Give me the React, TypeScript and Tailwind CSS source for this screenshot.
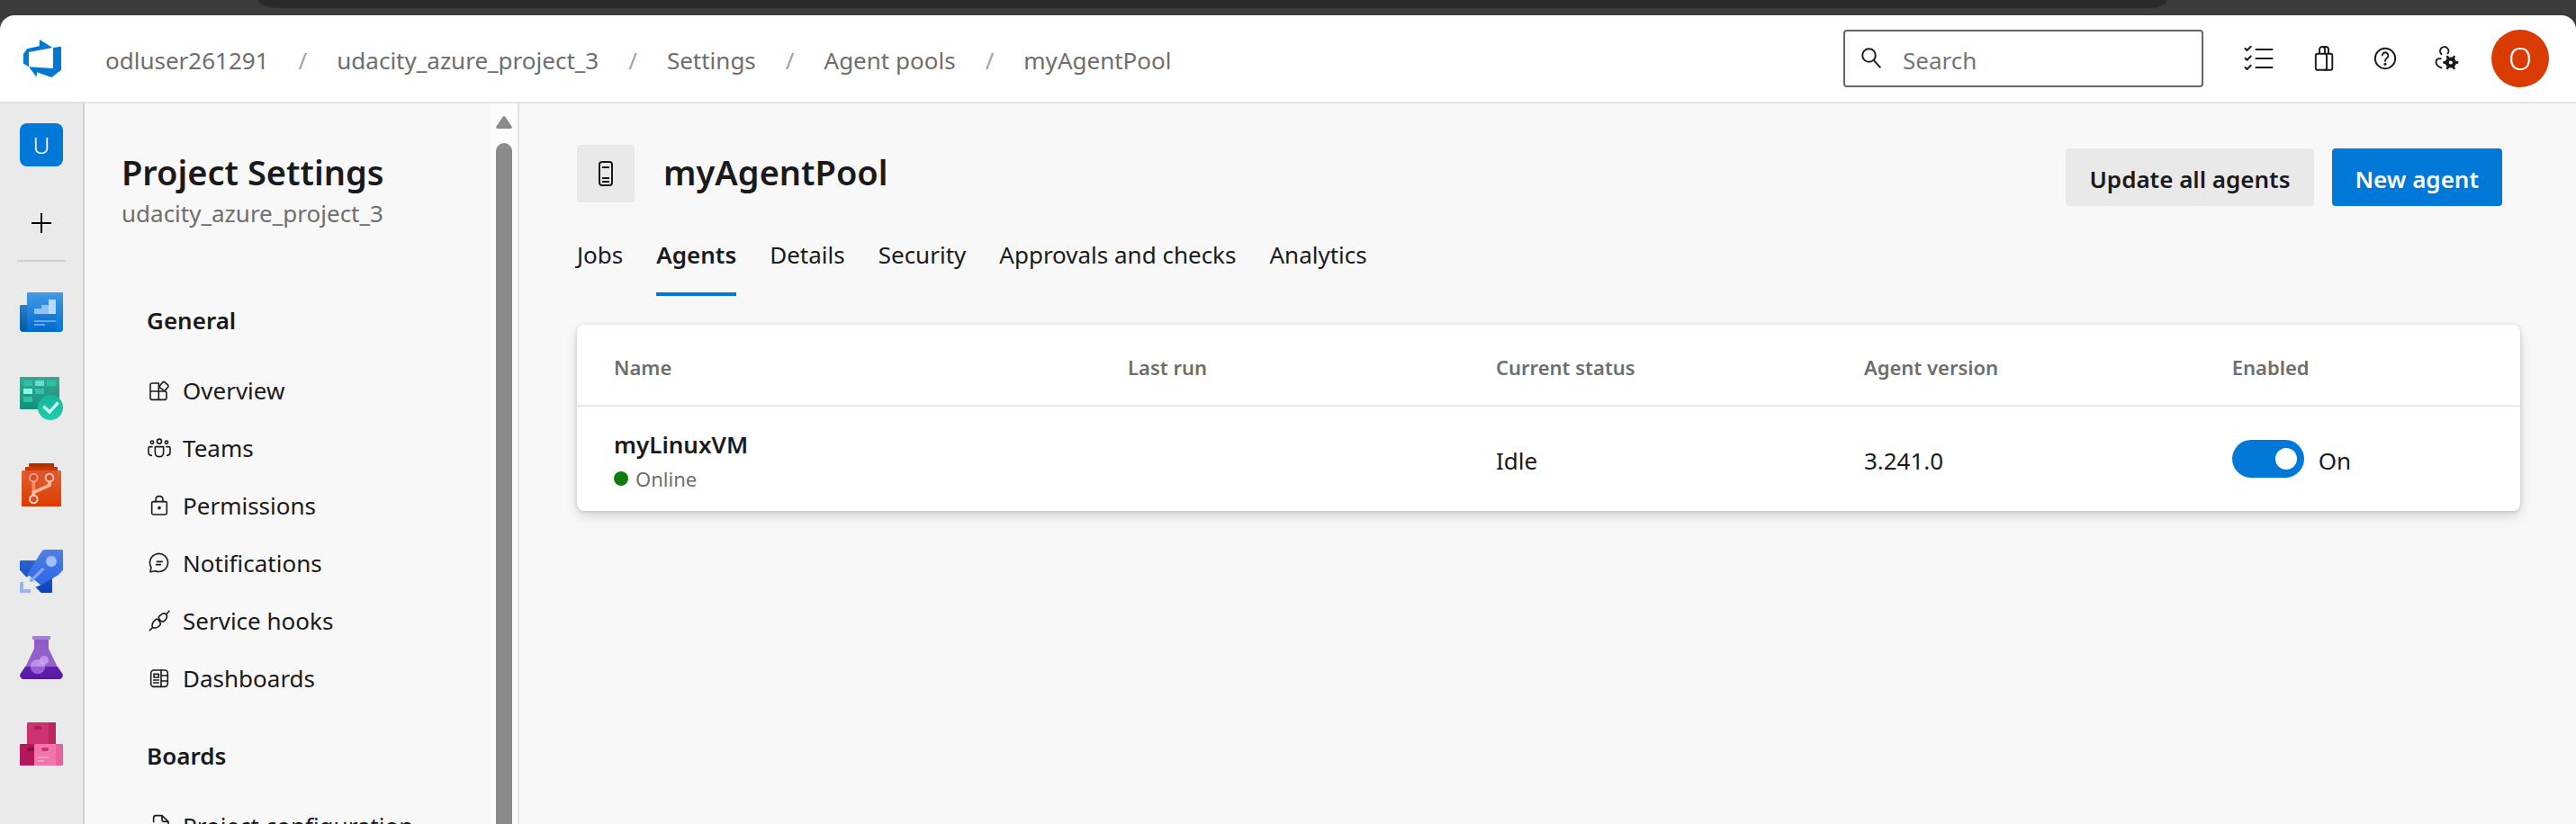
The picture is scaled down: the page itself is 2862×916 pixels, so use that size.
import type { ReactNode } from "react";

const crumbs = ["odluser261291", "udacity_azure_project_3", "Settings", "Agent pools", "myAgentPool"];
const tabs = ["Jobs", "Agents", "Details", "Security", "Approvals and checks", "Analytics"];
const columns = ["Name", "Last run", "Current status", "Agent version", "Enabled"];

/* ---------- line icons ---------- */

function MenuIcon({ top, children }: { top: number; children: ReactNode }) {
  return (
    <svg
      className="size-[26px] shrink-0"
      viewBox={`42 ${top} 78 78`}
      fill="none"
      stroke="currentColor"
      strokeWidth="4.8"
      strokeLinecap="round"
      strokeLinejoin="round"
      aria-hidden="true"
    >
      {children}
    </svg>
  );
}

const overviewIcon = (
  <MenuIcon top={18}>
    <path d="M79 33H57q-6 0-6 6v43q0 6 6 6h42q6 0 6-6V66q0-6-6-6H51M79 33v55" />
    <path d="M93 29.500q3-2.500 6 0l11 10q2.500 3 0 6l-9 11q-3 2.500-6 0l-12-9q-2.500-3 0-6z" />
  </MenuIcon>
);
const teamsIcon = (
  <MenuIcon top={210}>
    <circle cx="81" cy="227" r="7.500" />
    <circle cx="57" cy="230" r="5" />
    <circle cx="105" cy="230" r="5" />
    <path d="M67 245h28v18q0 15-14 15t-14-15zM57 245H50q-5 0-5 5v14q0 9 10 10M105 245h7q5 0 5 5v14q0 9-10 10" />
  </MenuIcon>
);
const lockIcon = (
  <MenuIcon top={402}>
    <rect x="56" y="428" width="50" height="43" rx="5" />
    <path d="M69 428v-6q0-12 12-12t12 12v6" />
    <circle cx="81" cy="449" r="3" fill="currentColor" />
  </MenuIcon>
);
const chatIcon = (
  <MenuIcon top={594}>
    <path d="M51 662l3-15a30 30 0 1 1 14 12zM73 628h18M71 638h14" />
  </MenuIcon>
);
const plugIcon = (
  <MenuIcon top={786}>
    <path d="M49 857l10-9M104 804l10-11M58 847q-4-12 9-24l5-4q4 0 13 14l-1 6q-13 15-26 8zM79 812q0 12 14 17 6-3 9-8 8-9 2-17-9-7-17 1-6 4-8 7z" />
  </MenuIcon>
);
const dashboardIcon = (
  <MenuIcon top={978}>
    <rect x="53" y="990" width="56" height="55" rx="10" />
    <path d="M87 990v55M87 1008h22M87 1026h22M63 1003h16v11H63zM62 1023h17M62 1032h17" />
  </MenuIcon>
);
const configIcon = (
  <MenuIcon top={1470}>
    <path d="M62 1496v-14q0-7 7-7h21l21 20v38q0 8-8 8H88M90 1475v13q0 7 7 7h14" />
    <circle cx="66" cy="1522" r="11" />
  </MenuIcon>
);

const groups = [
  {
    title: "General",
    items: [
      { label: "Overview", icon: overviewIcon },
      { label: "Teams", icon: teamsIcon },
      { label: "Permissions", icon: lockIcon },
      { label: "Notifications", icon: chatIcon },
      { label: "Service hooks", icon: plugIcon },
      { label: "Dashboards", icon: dashboardIcon },
    ],
  },
  { title: "Boards", items: [{ label: "Project configuration", icon: configIcon }] },
];

function Logo() {
  return (
    <svg className="size-[42px]" viewBox="48 42 126 126" fill="#0078d4" aria-hidden="true">
      <path d="M48 90l12-17 41-9 1-22 43 27-79 15v49l-18-11zM147 69l27-4v78l-32 25-49-17-1 16-26-34 81 5z" />
    </svg>
  );
}

const topIcons = [
  {
    label: "Work items",
    size: "w-[76px]",
    icon: (
      <svg width="34" height="30" viewBox="0 0 34 30" fill="none" stroke="currentColor" strokeWidth="2" strokeLinecap="round" strokeLinejoin="round">
        <path d="M13.500 5h18M13.500 15h18M13.500 25h18M1.500 4l2 2 4.200-4.200M1.500 14.700l2 2 4.200-4.200M1.500 25l2 2 4.200-4.200" />
      </svg>
    ),
  },
  {
    label: "Marketplace",
    size: "w-[68px]",
    icon: (
      <svg width="22" height="30" viewBox="0 0 22 30" fill="none" stroke="currentColor" strokeWidth="1.900" strokeLinejoin="round">
        <rect x="1.800" y="9.800" width="18.500" height="18" rx="2" />
        <path d="M6 9.800V5a3 3 0 0 1 6 0v4.800M9 2h4a3 3 0 0 1 3 3v4.800M12 9.800q2 0 2 2.500v13q0 2.500-2 2.500" />
      </svg>
    ),
  },
  {
    label: "Help",
    size: "w-[68px]",
    icon: (
      <svg width="26" height="26" viewBox="-1 -1 26 26" fill="none" stroke="currentColor" strokeWidth="1.900" strokeLinecap="round">
        <circle cx="12" cy="12" r="11.200" />
        <path d="M8.800 8.600a3.300 3.300 0 1 1 5.600 2.400c-1.500 1.300-2.400 2-2.400 3.900" />
        <circle cx="12" cy="18.300" r="0.700" />
      </svg>
    ),
  },
  {
    label: "User settings",
    size: "w-[68px]",
    icon: (
      <svg width="28" height="28" viewBox="-1.500 0 28 28" fill="none" stroke="currentColor" strokeWidth="1.900" strokeLinecap="round">
        <path d="M7 9.200a4.700 4.700 0 1 1 7.200-1M6.200 14.200C2.800 13.800 1 15.300 1 17.400c0 3.400 2.600 5.800 6 6.900" />
        <circle cx="17.300" cy="18.500" r="4.100" strokeWidth="4" />
        <path
          d="M11.300 18.500H10M23.300 18.500h1.300M14.300 13.300l-.7-1.200M20.300 13.300l.7-1.200M14.300 23.700l-.7 1.200M20.300 23.700l.7 1.200"
          strokeWidth="2.800"
        />
      </svg>
    ),
  },
];

/* ---------- coloured service icons ---------- */

function Gradient({ id, from, to }: { id: string; from: string; to: string }) {
  return (
    <linearGradient id={id} x1="0" y1="0" x2="0" y2="1">
      <stop offset="0" stopColor={from} />
      <stop offset="1" stopColor={to} />
    </linearGradient>
  );
}

const services = [
  {
    label: "Overview",
    icon: (
      <svg className="size-12" viewBox="36 39 144 144" aria-hidden="true">
        <defs>
          <Gradient id="ov1" from="#2f7dc4" to="#005ba1" />
          <Gradient id="ov2" from="#439ce6" to="#0068cc" />
          <Gradient id="ov3" from="#2c8ade" to="#0078dc" />
        </defs>
        <path d="M40 87h24v78q0 12-12 12H48q-12 0-12-12V91q0-4 4-4z" fill="url(#ov1)" />
        <path d="M63 45h114q3 0 3 3v117q0 12-12 12H48q12-1 12-12V48q0-3 3-3z" fill="url(#ov2)" />
        <path d="M156 87h24v78q0 12-12 12t-12-12z" fill="url(#ov3)" />
        <path d="M84 99h24V87h24v30H86q-2 0-2-2z" fill="#8cc4f8" />
        <path d="M132 69h22q2 0 2 2v46h-24z" fill="#b8dcff" />
        <path d="M84 138h72v6H84zM84 150h36v6H84z" fill="#5fa9ee" />
      </svg>
    ),
  },
  {
    label: "Boards",
    icon: (
      <svg className="size-12" viewBox="36 327 144 144" aria-hidden="true">
        <defs>
          <Gradient id="bo1" from="#3aa893" to="#128f78" />
          <Gradient id="bo2" from="#19b199" to="#1bcfae" />
        </defs>
        <rect x="36" y="327" width="132" height="108" rx="3" fill="url(#bo1)" />
        <path d="M48 339h30v18H48zM126 339h30v18h-30zM87 366h30v18H87zM48 393h30v18H48z" fill="#30c2a8" />
        <path d="M87 339h30v18H87z" fill="#62e0ca" />
        <path d="M48 366h30v18H48z" fill="#86f7e3" />
        <circle cx="138" cy="429" r="42" fill="url(#bo2)" />
        <path d="M115 425l20 19 29-32" fill="none" stroke="#c9fff3" strokeWidth="10" />
      </svg>
    ),
  },
  {
    label: "Repos",
    icon: (
      <svg className="size-12" viewBox="36 615 144 144" aria-hidden="true">
        <defs>
          <Gradient id="re1" from="#e26232" to="#dc3b00" />
        </defs>
        <path d="M69 615h78q3 0 3 3v12H66v-12q0-3 3-3z" fill="#b03000" />
        <path d="M57 627h102q3 0 3 3v12H54v-12q0-3 3-3z" fill="#cb3900" />
        <rect x="42" y="639" width="132" height="120" rx="3" fill="url(#re1)" />
        <path d="M54 639h108v30H54z" fill="#d9502e" opacity=".7" />
        <path d="M82 676v46" stroke="#f98f6c" strokeWidth="11" />
        <path d="M82 724v-12l53-24v-13" fill="none" stroke="#ffb9a2" strokeWidth="11" />
        <g fill="#da4c25" strokeWidth="6">
          <circle cx="82" cy="663" r="13" stroke="#f89c7e" />
          <circle cx="135" cy="663" r="13" stroke="#ffbea9" />
          <circle cx="82" cy="735" r="13" stroke="#ffd5c8" />
        </g>
      </svg>
    ),
  },
  {
    label: "Pipelines",
    icon: (
      <svg className="size-12" viewBox="36 63 144 144" aria-hidden="true">
        <defs>
          <Gradient id="pi1" from="#2b63cf" to="#0c43ba" />
          <Gradient id="pi2" from="#4f80e8" to="#2b66e3" />
        </defs>
        <path d="M40 99h52L60 157 36 131V103q0-4 4-4zM144 146v57q0 4-4 4h-33l-24-24z" fill="url(#pi1)" />
        <path d="M118 63h58q4 0 4 4v64l-15 16-62 37q-4 0-9-4l-34-29 1-6 46-73q5-9 11-9z" fill="url(#pi2)" />
        <path d="M52 158l16-8 37 31-16 7-7-6 6-7-7-6-7 7-7-7 7-8-7-6-6 10z" fill="#eaeaea" />
        <path d="M71 169l44-43" stroke="#7fa6f3" strokeWidth="10" />
        <circle cx="141" cy="102" r="18" fill="#a3bff7" />
        <path d="M36 171h12v24h24v12H36z" fill="#95b3f4" />
      </svg>
    ),
  },
  {
    label: "Test plans",
    icon: (
      <svg className="size-12" viewBox="36 351 144 144" aria-hidden="true">
        <defs>
          <Gradient id="te1" from="#8f5ac6" to="#9563cc" />
          <Gradient id="te2" from="#5f22b0" to="#5718a3" />
        </defs>
        <path d="M84 360h48v33l29 60H55l29-60z" fill="url(#te1)" />
        <rect x="78" y="351" width="60" height="12" rx="2" fill="#a67edb" />
        <path d="M54 453h108l16 24q5 12-7 18H45q-12-6-7-18z" fill="url(#te2)" />
        <circle cx="96" cy="453" r="24" fill="#c39bed" opacity=".85" />
        <circle cx="117" cy="432" r="15" fill="#d3b2f3" opacity=".65" />
        <path d="M72 453a24 24 0 0 0 48 0z" fill="#9a5dd8" />
      </svg>
    ),
  },
  {
    label: "Artifacts",
    icon: (
      <svg className="size-12" viewBox="36 639 144 144" aria-hidden="true">
        <rect x="60" y="639" width="96" height="75" rx="3" fill="#cd3370" />
        <path d="M132 639h21q3 0 3 3v69h-24z" fill="#bb2663" />
        <path d="M39 711h45v72H39q-3 0-3-3v-66q0-3 3-3z" fill="#b4175b" />
        <path d="M87 711h69v72H87q-3 0-3-3v-66q0-3 3-3z" fill="#f075a8" />
        <path d="M156 711h21q3 0 3 3v66q0 3-3 3h-21z" fill="#e86199" />
        <rect x="84" y="651" width="24" height="12" rx="6" fill="#ac1f58" />
        <path d="M66 723h18v12H66q-6 0-6-6t6-6z" fill="#8b0f42" />
        <rect x="108" y="723" width="24" height="12" rx="6" fill="#cb2f6c" />
        <path d="M96 753h36v6H96zM96 765h21v6H96z" fill="#ff99c4" />
      </svg>
    ),
  },
];

/* ---------- page parts ---------- */

function TopBar() {
  return (
    <header className="flex h-[98px] shrink-0 items-center rounded-t-[16px] border-b-2 border-[#e4e4e4] bg-white pr-[30px] pl-[26px]">
      <a href="#home" aria-label="Azure DevOps">
        <Logo />
      </a>
      <nav aria-label="Breadcrumb" className="ml-[49px] flex-1">
        <ol className="flex items-center gap-[33px] pt-1 text-[#6e6e6e]">
          {crumbs.map((crumb, i) => (
            <li key={crumb} className="flex items-center gap-[33px]">
              {i > 0 && <span className="text-[#a3a3a3]">/</span>}
              <a href={`#${crumb}`}>{crumb}</a>
            </li>
          ))}
        </ol>
      </nav>
      <label className="flex h-16 w-[400px] items-center gap-6 rounded-[4px] border-2 border-[#666666] pl-[18px]">
        <svg width="22" height="24" viewBox="0 0 22 24" fill="none" stroke="#1f1f1f" strokeWidth="2" strokeLinecap="round" aria-hidden="true">
          <circle cx="8.500" cy="8.500" r="7.300" />
          <path d="M13.800 13.800l7 8" />
        </svg>
        <input
          type="search"
          placeholder="Search"
          aria-label="Search"
          className="w-0 flex-1 bg-transparent pt-1 outline-none placeholder:text-[#757575]"
        />
      </label>
      <div className="ml-6 flex items-center">
        {topIcons.map((item) => (
          <button key={item.label} type="button" aria-label={item.label} className={`flex h-16 items-center justify-center ${item.size}`}>
            {item.icon}
          </button>
        ))}
      </div>
      <button type="button" className="ml-4 flex size-16 items-center justify-center rounded-full bg-[#da3b01] text-[34px] font-light text-white">
        O
      </button>
    </header>
  );
}

function ServiceRail() {
  return (
    <nav aria-label="Services" className="flex w-[94px] shrink-0 flex-col items-center border-r-2 border-[#d0d0d0] bg-[#eaeaea] pt-[22px]">
      <a href="#project" className="flex size-12 items-center justify-center rounded-[8px] bg-[#0078d7] font-light text-white">
        U
      </a>
      <button type="button" aria-label="Add" className="mt-[39px] flex size-12 items-center justify-center">
        <svg width="22" height="22" viewBox="0 0 22 22" stroke="#000" strokeWidth="2">
          <path d="M0 11h22M11 0v22" />
        </svg>
      </button>
      <hr className="mt-[17px] w-[54px] border-t-2 border-[#d0d0d0]" />
      <ul className="mt-8 flex flex-col gap-12">
        {services.map((service) => (
          <li key={service.label}>
            <a href={`#${service.label}`} aria-label={service.label} className="block">
              {service.icon}
            </a>
          </li>
        ))}
      </ul>
    </nav>
  );
}

function SettingsMenu() {
  return (
    <aside className="flex w-[483px] shrink-0 border-r-2 border-[#e2e2e2]">
      <div className="flex-1 overflow-hidden pt-[52px] pl-[41px]">
        <h2 className="text-[38px] leading-[48px] font-semibold">Project Settings</h2>
        <p className="mb-[43px] leading-[44px] text-[#6e6e6e]">udacity_azure_project_3</p>
        {groups.map((group) => (
          <section key={group.title} className="pt-[22px] pl-[28px]">
            <h3 className="mb-[14px] leading-[64px] font-semibold">{group.title}</h3>
            <ul>
              {group.items.map((item) => (
                <li key={item.label}>
                  <a href={`#${item.label}`} className="flex h-16 items-center gap-[13px] pl-px">
                    {item.icon}
                    <span>{item.label}</span>
                  </a>
                </li>
              ))}
            </ul>
          </section>
        ))}
      </div>
      <div aria-hidden="true" className="flex w-[30px] flex-col items-center bg-[#fcfcfc] pt-[14px]">
        <svg width="18" height="14" viewBox="0 0 18 14" fill="#8b8b8b">
          <path d="M7.500 1q1.500-2 3 0l7 10.500q1 2.500-1.500 2.500H2q-2.500 0-1.500-2.500z" />
        </svg>
        <div className="mt-4 w-[18px] flex-1 rounded-t-full bg-[#8b8b8b]" />
      </div>
    </aside>
  );
}

function AgentTable() {
  return (
    <div className="mt-8 rounded-[8px] bg-white shadow-[0_6px_14px_rgba(0,0,0,0.13),0_1px_4px_rgba(0,0,0,0.16)]">
      <table className="w-full table-fixed text-left">
        <colgroup>
          <col className="w-[28.35%]" />
          <col className="w-[18.94%]" />
          <col className="w-[18.94%]" />
          <col className="w-[18.94%]" />
          <col />
        </colgroup>
        <thead>
          <tr className="h-[90px] border-b-2 border-[#eaeaea] text-[22px] text-[#6e6e6e]">
            {columns.map((column) => (
              <th key={column} scope="col" className="p-0 pt-1 font-semibold first:pl-[41px]">
                {column}
              </th>
            ))}
          </tr>
        </thead>
        <tbody>
          <tr className="h-[117px]">
            <td className="pt-1 pl-[41px]">
              <div className="leading-[40px] font-semibold">myLinuxVM</div>
              <div className="flex items-center gap-2 text-[22px] leading-[36px] text-[#6e6e6e]">
                <span className="size-4 rounded-full bg-[#107c10]" />
                Online
              </div>
            </td>
            <td />
            <td className="pt-1">Idle</td>
            <td className="pt-1">3.241.0</td>
            <td>
              <label className="flex items-center gap-4">
                <input
                  type="checkbox"
                  defaultChecked
                  className="flex h-[42px] w-20 appearance-none items-center justify-start rounded-full bg-[#8a8a8a] px-2 before:size-6 before:rounded-full before:bg-white before:content-[''] checked:justify-end checked:bg-[#0078d7]"
                />
                <span className="pt-1">On</span>
              </label>
            </td>
          </tr>
        </tbody>
      </table>
    </div>
  );
}

export default function App() {
  return (
    <div className="flex h-screen flex-col overflow-hidden bg-[#3b3b3b] font-['Noto_Sans','Open_Sans',sans-serif] text-[26px] leading-[36px] text-[#1a1a1a]">
      <div className="h-[17px] shrink-0 pr-[454px] pl-[287px]">
        <div className="h-[9px] bg-[#2a2a2a] [border-radius:0_0_22px_22px/0_0_9px_9px]" />
      </div>
      <TopBar />
      <div className="flex min-h-0 flex-1 bg-[#f8f8f8]">
        <ServiceRail />
        <SettingsMenu />
        <main className="min-w-0 flex-1 pt-[46px] pr-[62px] pl-16">
          <div className="flex items-start">
            <div className="flex size-16 items-center justify-center rounded-[4px] bg-[#e9e9e9]">
              <svg width="16" height="28" viewBox="0 0 16 28" fill="none" stroke="#1a1a1a" strokeWidth="2" aria-hidden="true">
                <rect x="1" y="1" width="14" height="26" rx="3" />
                <path d="M4 7h8M4 19h8M4 23h8" />
              </svg>
            </div>
            <h1 className="ml-8 flex-1 text-[38px] leading-[60px] font-semibold">myAgentPool</h1>
            <div className="mt-1 mr-5 flex gap-5 font-semibold">
              <button type="button" className="h-16 rounded-[4px] bg-[#e9e9e9] px-[26px] pt-1">
                Update all agents
              </button>
              <button type="button" className="h-16 rounded-[4px] bg-[#0078d7] px-[26px] pt-1 text-white">
                New agent
              </button>
            </div>
          </div>
          <div role="tablist" className="mt-2 flex gap-[37px]">
            {tabs.map((tab) => (
              <button
                key={tab}
                type="button"
                role="tab"
                aria-selected={tab === "Agents"}
                className={`h-[92px] border-y-4 border-t-transparent ${
                  tab === "Agents" ? "border-b-[#0078d7] font-semibold" : "border-b-transparent"
                }`}
              >
                {tab}
              </button>
            ))}
          </div>
          <AgentTable />
        </main>
      </div>
    </div>
  );
}
